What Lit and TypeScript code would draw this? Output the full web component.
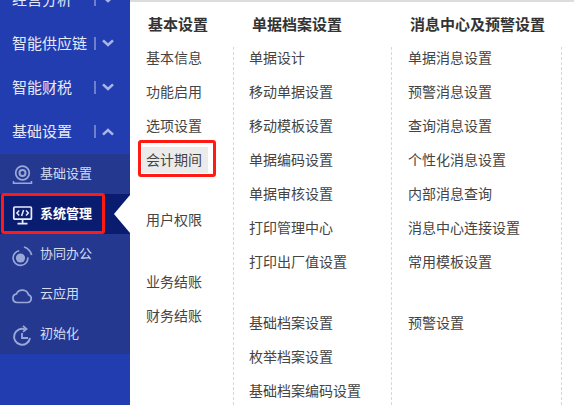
import { LitElement, html, css, svg } from "lit";
import { customElement } from "lit/decorators.js";

const chevDown = html`<svg class="chev" width="12" height="8" viewBox="0 0 12 8"><path d="M1 1.4 L6 6 L11 1.4" fill="none" stroke="currentColor" stroke-width="2.6"/></svg>`;
const chevUp = html`<svg class="chev up" width="12" height="8" viewBox="0 0 12 8"><path d="M1 6.6 L6 2 L11 6.6" fill="none" stroke="currentColor" stroke-width="2.6"/></svg>`;

const icons: Record<string, unknown> = {
  base: svg`<circle cx="10.5" cy="9" r="6.8" fill="none" stroke="currentColor" stroke-width="1.7"/><circle cx="10.5" cy="9" r="3" fill="none" stroke="currentColor" stroke-width="2"/><path d="M1.5 17V19.3H19.5V17" stroke="currentColor" stroke-width="1.5" fill="none"/>`,
  sys: svg`<rect x="1.8" y="3" width="17.6" height="12.2" rx="1" fill="none" stroke="currentColor" stroke-width="1.7"/><path d="M10.6 15.2V19.5M5.5 19.6H15.5" stroke="currentColor" stroke-width="1.7" fill="none"/><path d="M7.2 6.6 4.9 9l2.3 2.4M14 6.6 16.3 9 14 11.4M11.6 6 9.6 12" stroke="currentColor" stroke-width="1.5" fill="none"/>`,
  collab: svg`<circle cx="8.5" cy="14" r="4.6" fill="currentColor"/><circle cx="8.5" cy="14" r="7.4" fill="none" stroke="currentColor" stroke-width="1.6" stroke-dasharray="34 12.5" transform="rotate(-5 8.5 14)"/><path d="M12 3A11.5 11.5 0 0 1 19.6 11" fill="none" stroke="currentColor" stroke-width="1.8"/>`,
  cloud: svg`<path d="M5 18.5H15.5A4 4 0 0 0 16.5 10.7 6.5 6.5 0 0 0 4.5 9.8 4.4 4.4 0 0 0 5 18.5Z" fill="none" stroke="currentColor" stroke-width="1.7"/>`,
  init: svg`<path d="M13 5.3A8 8 0 1 0 18 14" fill="none" stroke="currentColor" stroke-width="1.9"/><path d="M11 1.8 14.6 5 11 7.8" fill="none" stroke="currentColor" stroke-width="1.7"/><path d="M10 9v5h6" fill="none" stroke="currentColor" stroke-width="1.8"/>`,
};

type Item = { t: string; cls?: string };
const col1: Item[] = [
  { t: "基本信息" }, { t: "功能启用" }, { t: "选项设置" }, { t: "会计期间", cls: "hover" },
  { t: "用户权限", cls: "g26" }, { t: "业务结账", cls: "g28" }, { t: "财务结账" },
];
const col2: Item[] = [
  { t: "单据设计" }, { t: "移动单据设置" }, { t: "移动模板设置" }, { t: "单据编码设置" }, { t: "单据审核设置" },
  { t: "打印管理中心" }, { t: "打印出厂值设置" }, { t: "基础档案设置", cls: "g27" }, { t: "枚举档案设置" }, { t: "基础档案编码设置" },
];
const col3: Item[] = [
  { t: "单据消息设置" }, { t: "预警消息设置" }, { t: "查询消息设置" }, { t: "个性化消息设置" }, { t: "内部消息查询" },
  { t: "消息中心连接设置" }, { t: "常用模板设置" }, { t: "预警设置", cls: "g27" },
];
const mains = [
  { t: "经营分析", up: false }, { t: "智能供应链", up: false }, { t: "智能财税", up: false }, { t: "基础设置", up: true },
];
const subs = [
  { t: "基础设置", i: "base" }, { t: "系统管理", i: "sys", active: true }, { t: "协同办公", i: "collab" },
  { t: "云应用", i: "cloud" }, { t: "初始化", i: "init" },
];

@customElement("app-root")
export class AppRoot extends LitElement {
  static styles = css`
    :host {
      display: block;
      width: 574px;
      height: 405px;
      overflow: hidden;
      position: relative;
      background: #fff;
      font-family: "Noto Sans CJK SC", "Liberation Sans", sans-serif;
    }
    .page { display: flex; height: 405px; }
    .side { width: 130px; flex: none; background: #223db0; overflow: hidden; }
    .mains { margin-top: -22px; }
    .main {
      height: 44px; box-sizing: border-box; padding: 0 0 3px 12px; display: flex; align-items: center;
      color: #e6eaf8; font-size: 15px; position: relative;
    }
    .main .txt { flex: 1; }
    .sep { position: absolute; left: 94px; top: 15px; width: 2px; height: 13px; background: #6e80cc; }
    .chev { position: absolute; left: 102px; top: 17px; color: #a9b5e4; }
    .chev.up { top: 18px; }
    .subs { background: #243890; }
    .sub {
      height: 40px; box-sizing: border-box; padding: 0 0 3px 12px; display: flex; align-items: center; gap: 8px;
      color: #d5dcf2; font-size: 13px; position: relative;
    }
    .sub svg { position: absolute; left: 12px; top: 10px; width: 20px; height: 20px; color: #9aa8d8; overflow: visible; }
    .sub span { margin-left: 28px; }
    .sub.active { background: #0a1c70; color: #fff; font-weight: 700; }
    .sub.active svg { color: #e8edfc; }
    .content { flex: 1; border-top: 2px solid #dcdcdc; display: grid; grid-template-columns: 103px 158px 170px 1fr; }
    .head {
      height: 45px; box-sizing: border-box; padding: 11px 0 0 18px; font-size: 15px; font-weight: 700;
      color: #333; line-height: 22px; white-space: nowrap;
    }
    .col + .col .head { padding-left: 19px; }
    .list { border-left: 1px dashed #d8d8d8; height: 358px; padding-left: 15px; display: flex; flex-direction: column; gap: 12px; }
    .col:first-child .list { border-left: 0; padding-left: 16px; }
    .col:nth-child(3) .list { padding-left: 16px; }
    .item { height: 22px; line-height: 20px; font-size: 14px; color: #444; white-space: nowrap; }
    .item.g26 { margin-top: 26px; }
    .item.g27 { margin-top: 27px; }
    .item.g28 { margin-top: 28px; }
    .item.hover { position: relative; z-index: 0; }
    .item.hover::before { content: ""; position: absolute; z-index: -1; left: -4px; top: -2px; width: 66px; height: 26px; background: #ebebeb; }
    .tri {
      position: absolute; left: 114px; top: 195px; width: 16px; height: 38px;
      background: #fff; clip-path: polygon(100% 0, 0 50%, 100% 100%);
    }
    .mark { position: absolute; border: 3px solid #ff1a14; border-radius: 3px; box-sizing: border-box; }
    .mark.a { left: 1px; top: 193px; width: 104px; height: 41px; }
    .mark.b { left: 138px; top: 140px; width: 78px; height: 37px; }
  `;

  private list(items: Item[]) {
    return html`<div class="list">${items.map((i) => html`<div class="item ${i.cls ?? ""}">${i.t}</div>`)}</div>`;
  }

  render() {
    return html`
      <div class="page">
        <div class="side">
          <div class="mains">
            ${mains.map((m) => html`<div class="main"><span class="txt">${m.t}</span><i class="sep"></i>${m.up ? chevUp : chevDown}</div>`)}
          </div>
          <div class="subs">
            ${subs.map((s) => html`<div class="sub ${s.active ? "active" : ""}"><svg viewBox="0 0 20 20">${icons[s.i]}</svg><span>${s.t}</span></div>`)}
          </div>
        </div>
        <div class="content">
          <div class="col"><div class="head">基本设置</div>${this.list(col1)}</div>
          <div class="col"><div class="head">单据档案设置</div>${this.list(col2)}</div>
          <div class="col"><div class="head">消息中心及预警设置</div>${this.list(col3)}</div>
          <div class="col"><div class="head"></div><div class="list"></div></div>
        </div>
      </div>
      <div class="tri"></div>
      <div class="mark a"></div>
      <div class="mark b"></div>
    `;
  }
}
